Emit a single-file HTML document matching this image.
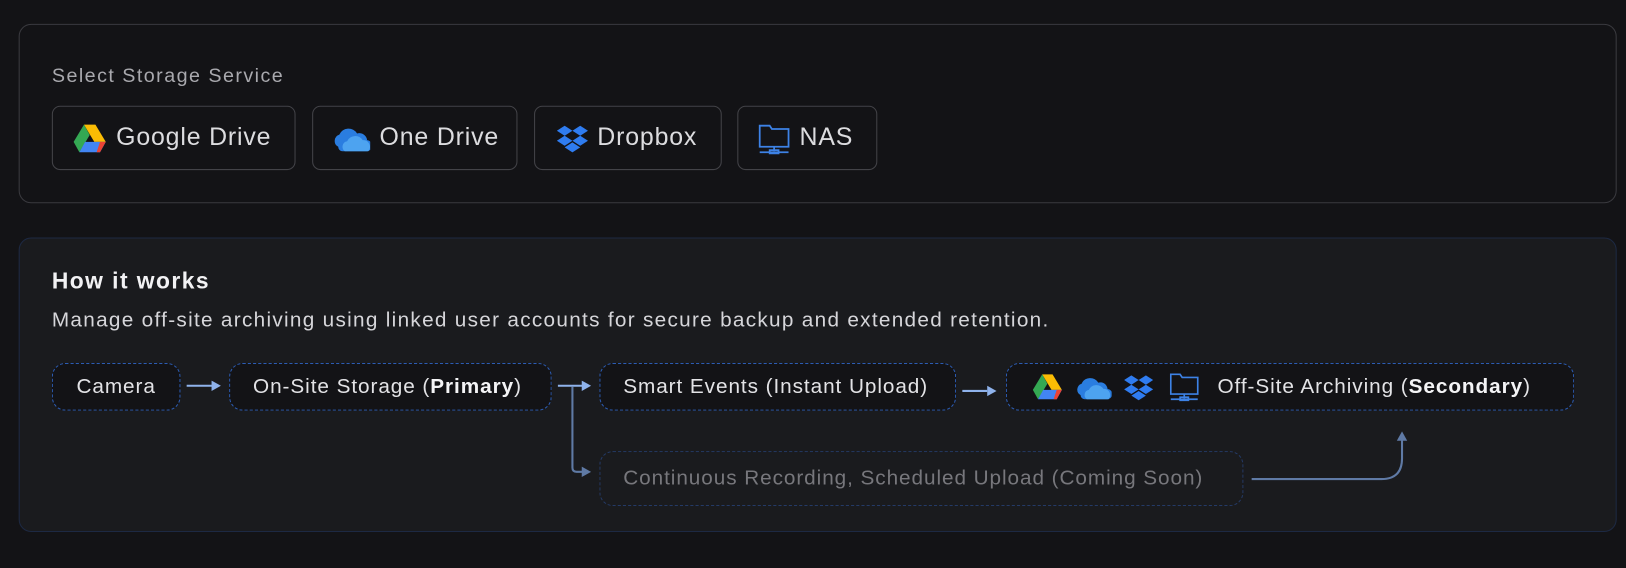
<!DOCTYPE html>
<html><head><meta charset="utf-8"><style>
*{box-sizing:border-box;margin:0;padding:0}
body{width:1626px;height:568px;background:#131316;font-family:"Liberation Sans",sans-serif;position:relative;overflow:hidden}
#w{position:absolute;left:0;top:0;width:1568px;height:548px;transform:scale(1.037);transform-origin:0 0}
.card1{position:absolute;left:18px;top:23px;width:1541px;height:173px;border:1.5px solid #3a3a3f;border-radius:12px}
.card2{position:absolute;left:18px;top:229px;width:1541px;height:284px;border:1.5px solid #1d2943;border-radius:12px;background:#1a1b1e}
.lbl{position:absolute;left:50px;top:63px;font-size:19px;letter-spacing:1.4px;color:#a9a9ae}
.btn{position:absolute;top:102px;height:62px;border:1.5px solid #434348;border-radius:8px;display:flex;align-items:center;padding-left:19px;gap:9px;font-size:24px;letter-spacing:0.8px;color:#dcdcdf}
.btn svg{flex:none}
h2{position:absolute;left:50px;top:258px;font-size:22px;letter-spacing:1.4px;color:#f2f2f4;font-weight:bold}
.desc{position:absolute;left:50px;top:298px;font-size:20px;letter-spacing:1.25px;color:#d6d6da;white-space:nowrap}
.box{position:absolute;height:46px;border:1.5px dashed #2c5cb3;border-radius:13px;display:flex;align-items:center;font-size:20px;letter-spacing:0.9px;color:#e3e3e6;background:#131316;white-space:nowrap}
.box b{color:#f4f4f6}
</style></head><body>
<svg width="0" height="0" style="position:absolute"><defs>
<g id="gd"><path d="M9 2h10l9 15h-10z" fill="#fbbc04"/><path d="M9 2L0 17l5 9 9-15z" fill="#34a853"/><path d="M5 26h18l5-9H10z" fill="#4285f4"/><path d="M23 26l5-9h-5l-3 9z" fill="#ea4335"/></g>
<g id="od"><path d="M4 22a6 6 0 0 1 1-11 9 9 0 0 1 16-1 7 7 0 0 1 9 6 5 5 0 0 1-1 10H8a4 4 0 0 1-4-4z" fill="#2a7de0"/><path d="M10 26a5 5 0 0 1 2-9 8 8 0 0 1 14-1 6 6 0 0 1 5 10z" fill="#4da3f0"/></g>
<g id="db" fill="#2f7cf0"><path d="M7 3l7 4.5-7 4.5-7-4.5z"/><path d="M21 3l7 4.5-7 4.5-7-4.5z"/><path d="M7 12l7 4.5-7 4.5-7-4.5z"/><path d="M21 12l7 4.5-7 4.5-7-4.5z"/><path d="M14 18l7 4.5-7 4.5-7-4.5z"/></g>
<g id="nas" fill="none" stroke="#3d82e6" stroke-width="1.6"><path d="M1 3h9l2 3h15v16H1z"/><path d="M14 22v4M1 27h26M10 25h8v3h-8z"/></g>
</defs></svg>
<div id="w">
<div class="card1"></div>
<div class="lbl">Select Storage Service</div>
<div class="btn" style="left:50px;width:235px"><svg width="33" height="31" viewBox="0 0 28 28"><use href="#gd"/></svg>Google Drive</div>
<div class="btn" style="left:301px;width:198px"><svg width="36" height="30" viewBox="0 0 32 28"><use href="#od"/></svg>One Drive</div>
<div class="btn" style="left:515px;width:181px;padding-left:21px"><svg width="30" height="30" viewBox="0 0 28 28"><use href="#db"/></svg>Dropbox</div>
<div class="btn" style="left:711px;width:135px"><svg width="31" height="31" viewBox="0 0 28 29"><use href="#nas"/></svg>NAS</div>

<div class="card2"></div>
<h2>How it works</h2>
<div class="desc">Manage off-site archiving using linked user accounts for secure backup and extended retention.</div>

<svg style="position:absolute;left:0;top:0" width="1568" height="548">
<g stroke="#8fb3ec" stroke-width="2" fill="#8fb3ec">
<line x1="180" y1="372" x2="205" y2="372"/><path d="M213 372l-9-5v10z" stroke="none"/>
<line x1="538" y1="372" x2="562" y2="372"/><path d="M570 372l-9-5v10z" stroke="none"/>
<line x1="928" y1="377" x2="952" y2="377"/><path d="M961 377l-9-5v10z" stroke="none"/>
</g>
<g stroke="#5f7aa5" stroke-width="2" fill="none">
<path d="M552 373v78q0 4 4 4h7"/>
<path d="M1207 462h125q20 0 20-20v-18"/>
</g>
<path d="M570 455l-9-5v10z" fill="#5f7aa5"/>
<path d="M1352 416l-5 9h10z" fill="#5f7aa5"/>
</svg>

<div class="box" style="left:50px;top:350px;width:124px;justify-content:center">Camera</div>
<div class="box" style="left:221px;top:350px;width:311px;padding-left:22px">On-Site Storage (<b>Primary</b>)</div>
<div class="box" style="left:578px;top:350px;width:344px;padding-left:22px">Smart Events (Instant Upload)</div>
<div class="box" style="left:970px;top:350px;width:548px;padding-left:25px;gap:14px">
<svg width="32" height="28"><use href="#gd"/></svg><svg width="34" height="28" style="margin-left:-4px"><use href="#od"/></svg><svg width="28" height="28" style="margin-left:-2px"><use href="#db"/></svg><svg width="30" height="30" style="margin-left:2px"><use href="#nas"/></svg><span style="margin-left:2px">Off-Site Archiving (<b>Secondary</b>)</span></div>
<div class="box" style="left:578px;top:435px;width:621px;height:53px;padding-left:22px;color:#77777c;border-color:#243a66;background:transparent">Continuous Recording, Scheduled Upload (Coming Soon)</div>
</div>
</body></html>
